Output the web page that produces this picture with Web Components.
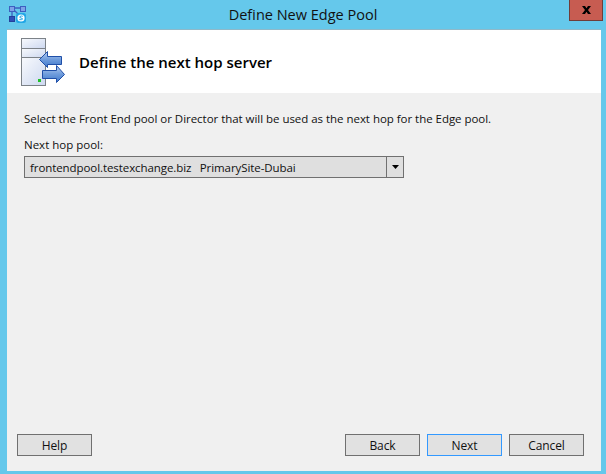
<!DOCTYPE html>
<html><head><meta charset="utf-8"><style>
html,body{margin:0;padding:0;width:606px;height:474px;overflow:hidden}
body{font-family:"Open Sans","Liberation Sans",sans-serif}
</style></head><body>
<wizard-window></wizard-window>
<template id="btn"><style>
:host{display:block;box-sizing:border-box;width:75px;height:22px;border:1px solid #707070;background:#e1e1e1;color:#111;font:12px/22px "Open Sans","Liberation Sans",sans-serif;letter-spacing:-.1px;text-align:center}
:host([focused]){border-color:#3399ff}
</style><slot></slot></template>
<template id="combo"><style>
:host{display:flex;box-sizing:border-box;width:380px;height:22px;border:1px solid #707070;background:#dfdfdf;color:#111;font:11.5px/22px "Open Sans","Liberation Sans",sans-serif}
.v{flex:1;padding-left:5px;white-space:pre;letter-spacing:-.08px;word-spacing:-.1px}
.a{width:16px;border-left:1px solid #707070;display:flex;align-items:center;justify-content:center}
</style><div class="v"><slot></slot></div><div class="a"><svg width="7" height="4" viewBox="0 0 7 4"><path d="M0 0H7L3.5 4Z" fill="#000"/></svg></div></template>
<template id="win"><style>
:host{display:flex;flex-direction:column;width:606px;height:474px;box-sizing:border-box;background:#65c8eb;padding:0 5px 3px 7px;position:relative;color:#111}
.tb{height:29px;flex:none;display:flex;align-items:center;justify-content:center;font-size:14.5px;color:#111;margin-right:-5px;margin-left:-7px}
.ico{position:absolute;left:8px;top:5px}
.x{position:absolute;left:569px;top:0;width:34px;height:21px;box-sizing:border-box;background:#c75c51;border:1px solid #6f3d38;border-top:0;display:flex;align-items:center;justify-content:center}
.body{flex:1;display:flex;flex-direction:column;background:#f0f0f0;border-top:1px solid #8fb9c9}
.hd{height:63px;background:#fff;display:flex;align-items:center;flex:none}
.hd svg{margin-left:13px;flex:none;align-self:flex-start;margin-top:7px}
h1{margin:1px 0 0 13px;font-size:15px;font-weight:600;color:#000}
.main{flex:1;padding:17px 0 0 17px;font-size:11.5px;display:flex;flex-direction:column}
.p{height:18px;line-height:18px;white-space:nowrap;letter-spacing:-.035px}
.l{height:15px;line-height:15px;margin-top:9px;margin-bottom:4px}
.ft{display:flex;padding:0 17px 15px 10px;gap:7px;flex:none}
.sp{flex:1}
</style>
<div class="tb">Define New Edge Pool</div>
<svg class="ico" width="20" height="20" viewBox="0 0 20 20">
<path d="M4 3H14M4 3V12M4 3L13 12" stroke="#3d5fc0" stroke-width="1.300" fill="none"/>
<rect x="1.500" y="1.500" width="5" height="5" fill="#7da3e6" stroke="#3d5fc0"/>
<rect x="12.500" y="1.500" width="5" height="5" fill="#7da3e6" stroke="#3d5fc0"/>
<rect x="1.500" y="11.500" width="5" height="5" fill="#2f50b8" stroke="#24409c"/>
<rect x="8" y="8" width="10" height="10" rx="2.500" fill="#22a7e6"/>
<circle cx="13" cy="13" r="3.600" fill="#fff"/>
<path d="M14.800 11.300Q13 10.500 12 11.500T13 13 14.500 14.200 11.300 14.700" stroke="#22a7e6" stroke-width="1" fill="none"/>
</svg>
<div class="x"><svg width="9" height="8" viewBox="0 0 9 8"><path d="M0 0H3L4.500 2.200 6 0H9L6 4 9 8H6L4.500 5.800 3 8H0L3 4Z" fill="#000"/></svg></div>
<div class="body">
<div class="hd">
<svg width="46" height="50" viewBox="0 0 46 50"><defs>
<linearGradient id="g" x1="0" y1="0" x2="1" y2="1"><stop offset="0" stop-color="#f8fafd"/><stop offset="1" stop-color="#cdd8f0"/></linearGradient>
<linearGradient id="b" x1="0" y1="0" x2="0" y2="1"><stop offset="0" stop-color="#b6cdf0"/><stop offset=".5" stop-color="#6f9cdc"/><stop offset="1" stop-color="#3f78cb"/></linearGradient></defs>
<g stroke="#7c8288" fill="url(#g)"><rect x="1.500" y="1.500" width="24" height="10"/><rect x="1.500" y="11.500" width="24" height="9"/><rect x="1.500" y="20.500" width="24" height="28"/></g>
<rect x="18" y="42" width="3" height="3" fill="#22c02a"/>
<path d="M19.500 22.500L27.500 14.500V19.500H41.500V27.500H27.500V30.500Z" fill="url(#b)" stroke="#1f4fa8" stroke-width="1"/>
<path d="M22.500 33.500H36.500V28.500L44.500 37.500 36.500 45.500V41.500H22.500Z" fill="url(#b)" stroke="#1f4fa8" stroke-width="1"/>
</svg>
<h1>Define the next hop server</h1></div>
<div class="main"><div class="p">Select the Front End pool or Director that will be used as the next hop for the Edge pool.</div><div class="l">Next hop pool:</div><x-combo>frontendpool.testexchange.biz   PrimarySite-Dubai</x-combo></div>
<div class="ft"><x-btn>Help</x-btn><div class="sp"></div><x-btn>Back</x-btn><x-btn focused>Next</x-btn><x-btn>Cancel</x-btn></div>
</div></template>
<script>
function def(n,t){customElements.define(n,class extends HTMLElement{constructor(){super();this.attachShadow({mode:'open'}).appendChild(document.getElementById(t).content.cloneNode(true));}});}
def('x-btn','btn');def('x-combo','combo');def('wizard-window','win');
</script>
</body></html>
